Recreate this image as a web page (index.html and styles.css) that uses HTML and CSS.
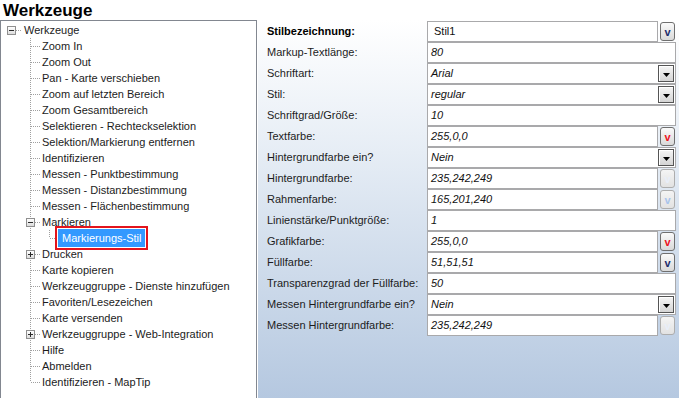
FILE: index.html
```html
<!DOCTYPE html>
<html lang="de">
<head>
<meta charset="utf-8">
<title>Werkzeuge</title>
<link rel="stylesheet" href="styles.css">
</head>
<body>
<div class="app">
  <h1 class="title">Werkzeuge</h1>
  <div class="main">
    <div class="tree-panel">
      <div class="row"><span class="conn-root"><span class="exp minus"></span></span><span class="label root-label">Werkzeuge</span></div>
      <div class="row"><span class="conn"></span><span class="label">Zoom In</span></div>
      <div class="row"><span class="conn"></span><span class="label">Zoom Out</span></div>
      <div class="row"><span class="conn"></span><span class="label">Pan - Karte verschieben</span></div>
      <div class="row"><span class="conn"></span><span class="label">Zoom auf letzten Bereich</span></div>
      <div class="row"><span class="conn"></span><span class="label">Zoom Gesamtbereich</span></div>
      <div class="row"><span class="conn"></span><span class="label">Selektieren - Rechteckselektion</span></div>
      <div class="row"><span class="conn"></span><span class="label">Selektion/Markierung entfernen</span></div>
      <div class="row"><span class="conn"></span><span class="label">Identifizieren</span></div>
      <div class="row"><span class="conn"></span><span class="label">Messen - Punktbestimmung</span></div>
      <div class="row"><span class="conn"></span><span class="label">Messen - Distanzbestimmung</span></div>
      <div class="row"><span class="conn"></span><span class="label">Messen - Flächenbestimmung</span></div>
      <div class="row"><span class="conn"><span class="exp minus"></span></span><span class="label">Markieren</span></div>
      <div class="row"><span class="pipe"></span><span class="conn conn-l2 last"></span><span class="label selected">Markierungs-Stil</span></div>
      <div class="row"><span class="conn"><span class="exp plus"></span></span><span class="label">Drucken</span></div>
      <div class="row"><span class="conn"></span><span class="label">Karte kopieren</span></div>
      <div class="row"><span class="conn"></span><span class="label">Werkzeuggruppe - Dienste hinzufügen</span></div>
      <div class="row"><span class="conn"></span><span class="label">Favoriten/Lesezeichen</span></div>
      <div class="row"><span class="conn"></span><span class="label">Karte versenden</span></div>
      <div class="row"><span class="conn"><span class="exp plus"></span></span><span class="label">Werkzeuggruppe - Web-Integration</span></div>
      <div class="row"><span class="conn"></span><span class="label">Hilfe</span></div>
      <div class="row"><span class="conn"></span><span class="label">Abmelden</span></div>
      <div class="row"><span class="conn last"></span><span class="label">Identifizieren - MapTip</span></div>
    </div>

    <div class="props">
      <div class="prop">
        <span class="plabel strong">Stilbezeichnung:</span>
        <div class="val"><span class="field"><span class="text plain">Stil1</span></span><span class="cbtn navy">v</span></div>
      </div>
      <div class="prop">
        <span class="plabel">Markup-Textlänge:</span>
        <div class="val"><span class="field"><span class="text">80</span></span></div>
      </div>
      <div class="prop">
        <span class="plabel">Schriftart:</span>
        <div class="val"><span class="field"><span class="text">Arial</span><span class="dd"><svg width="7" height="4" viewBox="0 0 7 4"><path d="M0 0H7L3.5 4Z" fill="#000"/></svg></span></span></div>
      </div>
      <div class="prop">
        <span class="plabel">Stil:</span>
        <div class="val"><span class="field"><span class="text">regular</span><span class="dd"><svg width="7" height="4" viewBox="0 0 7 4"><path d="M0 0H7L3.5 4Z" fill="#000"/></svg></span></span></div>
      </div>
      <div class="prop">
        <span class="plabel">Schriftgrad/Größe:</span>
        <div class="val"><span class="field"><span class="text">10</span></span></div>
      </div>
      <div class="prop">
        <span class="plabel">Textfarbe:</span>
        <div class="val"><span class="field"><span class="text">255,0,0</span></span><span class="cbtn red">v</span></div>
      </div>
      <div class="prop">
        <span class="plabel">Hintergrundfarbe ein?</span>
        <div class="val"><span class="field"><span class="text">Nein</span><span class="dd"><svg width="7" height="4" viewBox="0 0 7 4"><path d="M0 0H7L3.5 4Z" fill="#000"/></svg></span></span></div>
      </div>
      <div class="prop">
        <span class="plabel">Hintergrundfarbe:</span>
        <div class="val"><span class="field"><span class="text">235,242,249</span></span><span class="cbtn off">v</span></div>
      </div>
      <div class="prop">
        <span class="plabel">Rahmenfarbe:</span>
        <div class="val"><span class="field"><span class="text">165,201,240</span></span><span class="cbtn off blue">v</span></div>
      </div>
      <div class="prop">
        <span class="plabel">Linienstärke/Punktgröße:</span>
        <div class="val"><span class="field"><span class="text">1</span></span></div>
      </div>
      <div class="prop">
        <span class="plabel">Grafikfarbe:</span>
        <div class="val"><span class="field"><span class="text">255,0,0</span></span><span class="cbtn red">v</span></div>
      </div>
      <div class="prop">
        <span class="plabel">Füllfarbe:</span>
        <div class="val"><span class="field"><span class="text">51,51,51</span></span><span class="cbtn navy">v</span></div>
      </div>
      <div class="prop">
        <span class="plabel">Transparenzgrad der Füllfarbe:</span>
        <div class="val"><span class="field"><span class="text">50</span></span></div>
      </div>
      <div class="prop">
        <span class="plabel">Messen Hintergrundfarbe ein?</span>
        <div class="val"><span class="field"><span class="text">Nein</span><span class="dd"><svg width="7" height="4" viewBox="0 0 7 4"><path d="M0 0H7L3.5 4Z" fill="#000"/></svg></span></span></div>
      </div>
      <div class="prop">
        <span class="plabel">Messen Hintergrundfarbe:</span>
        <div class="val"><span class="field"><span class="text">235,242,249</span></span><span class="cbtn off">v</span></div>
      </div>
    </div>
  </div>
</div>
</body>
</html>
```

FILE: styles.css
```css
* {
  box-sizing: border-box;
  margin: 0;
  padding: 0;
}

html,
body {
  width: 679px;
  height: 398px;
  overflow: hidden;
  background: #fff;
}

body {
  font-family: "Liberation Sans", Arial, sans-serif;
  font-size: 11px;
  color: #1c1c1c;
}

.app {
  display: flex;
  flex-direction: column;
  height: 398px;
}

.title {
  height: 20px;
  font-size: 17px;
  line-height: 22px;
  font-weight: bold;
  padding-left: 3px;
  color: #000;
}

.main {
  flex: 1;
  display: flex;
  min-height: 0;
}

/* ---------- tree ---------- */
.tree-panel {
  width: 257px;
  flex: none;
  border: 1px solid #828790;
  border-bottom: none;
  padding-top: 1px;
  background: #fff;
}

.row {
  display: flex;
  height: 16px;
}

.label {
  line-height: 16px;
  margin-left: 1px;
  white-space: nowrap;
}

.conn-root {
  margin-left: 6px;
  width: 16px;
  display: flex;
  align-items: center;
  background-image: repeating-linear-gradient(to right, #a0a0a0 0 1px, transparent 1px 2px);
  background-position: 9px 50%;
  background-size: 6px 1px;
  background-repeat: no-repeat;
}

.conn {
  margin-left: 25px;
  width: 15px;
  flex: none;
  display: flex;
  align-items: center;
  background-image:
    repeating-linear-gradient(to bottom, #a0a0a0 0 1px, transparent 1px 2px),
    repeating-linear-gradient(to right, #a0a0a0 0 1px, transparent 1px 2px);
  background-position: 4px 0, 5px 50%;
  background-size: 1px 100%, 10px 1px;
  background-repeat: no-repeat;
}

.conn.last {
  background-size: 1px 8px, 10px 1px;
}

.pipe {
  margin-left: 25px;
  width: 19px;
  flex: none;
  background-image: repeating-linear-gradient(to bottom, #a0a0a0 0 1px, transparent 1px 2px);
  background-position: 4px 0;
  background-size: 1px 100%;
  background-repeat: no-repeat;
}

.conn.conn-l2 {
  margin-left: 0;
  width: 13px;
}

.conn.conn-l2.last {
  background-size: 1px 8px, 8px 1px;
}

.exp {
  width: 9px;
  height: 9px;
  border: 1px solid #8f8f8f;
  flex: none;
}

.exp.minus {
  background:
    linear-gradient(#2b2b2b, #2b2b2b) center / 5px 1px no-repeat,
    linear-gradient(#ffffff, #dcdcdc);
}

.exp.plus {
  background:
    linear-gradient(#2b2b2b, #2b2b2b) center / 5px 1px no-repeat,
    linear-gradient(#2b2b2b, #2b2b2b) center / 1px 5px no-repeat,
    linear-gradient(#ffffff, #dcdcdc);
}

.label.selected {
  height: 18px;
  line-height: 18px;
  margin: -1px 0 -1px 0;
  padding: 0 4px;
  background: #3399ff;
  color: #fff;
  box-shadow: 0 0 0 1px #fff, 0 0 0 3px #e3141c;
  position: relative;
}

/* ---------- properties ---------- */
.props {
  flex: 1;
  margin-left: 1px;
  padding: 1px 3px 0 9px;
  background: linear-gradient(to bottom, #ffffff 0%, #e6edf5 35%, #b5c8e0 100%);
  display: flex;
  flex-direction: column;
}

.prop {
  display: grid;
  grid-template-columns: 160px 1fr;
  height: 21px;
}

.plabel {
  line-height: 21px;
  white-space: nowrap;
  color: #1c1c1c;
}

.plabel.strong {
  font-weight: bold;
  color: #000;
}

.val {
  display: flex;
  align-items: center;
  gap: 2px;
}

.field {
  flex: 1;
  align-self: stretch;
  display: flex;
  align-items: center;
  border: 1px solid #a9a9ab;
  background: #fff;
  min-width: 0;
}

.text {
  flex: 1;
  padding-left: 3px;
  font-style: italic;
  line-height: 19px;
  color: #111;
}

.text.plain {
  font-style: normal;
  padding-left: 6px;
}

.dd {
  width: 16px;
  height: 17px;
  margin-right: 1px;
  border: 1px solid #555;
  background: linear-gradient(#f5f5f5, #d4d4d4);
  box-shadow: inset 1px 1px 0 #fff;
  display: flex;
  align-items: center;
  justify-content: center;
  padding-top: 2px;
}

.dd svg {
  display: block;
}

.cbtn {
  width: 15px;
  height: 19px;
  margin-right: 1px;
  border: 1px solid #6f6f6f;
  border-radius: 3px;
  background: linear-gradient(#fafafa, #d9d9d9);
  font-weight: bold;
  font-size: 11px;
  line-height: 18px;
  text-align: center;
  flex: none;
}

.cbtn.navy {
  color: #1d2c6c;
}

.cbtn.red {
  color: #ee1020;
}

.cbtn.off {
  border-color: #adadad;
  background: linear-gradient(#f4f4f4, #e2e2e2);
  color: #e8eef8;
}

.cbtn.off.blue {
  color: #a9c4ec;
}
```
